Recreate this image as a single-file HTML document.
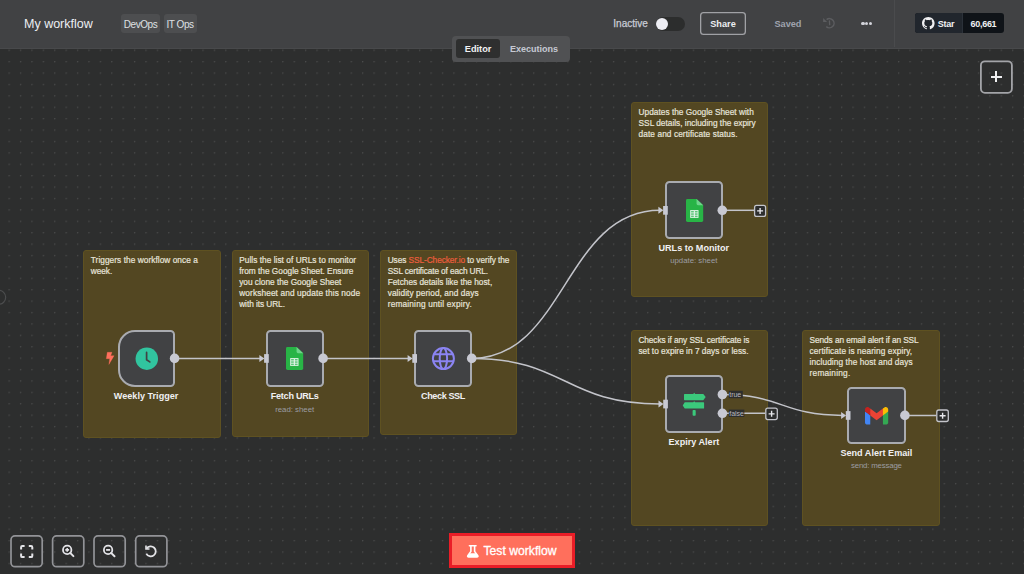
<!DOCTYPE html>
<html><head><meta charset="utf-8">
<style>
*{box-sizing:border-box;margin:0;padding:0}
html,body{width:1024px;height:574px;overflow:hidden}
body{position:relative;background:#2d2e2e;font-family:"Liberation Sans",sans-serif;color:#e4e4e6}
.abs{position:absolute}
svg{position:absolute;left:0;top:0;overflow:visible}
#hdr{position:absolute;left:0;top:0;width:1024px;height:48.7px;background:#414244;border-bottom:1px solid #48494b}
.tag{position:absolute;top:14px;height:18.5px;background:#4d4e50;border-radius:3px;font-size:10px;line-height:22.6px;letter-spacing:-0.45px;color:#dfe0e4;text-align:center}
.sticky{position:absolute;background:#534722;border:1px solid #5e5121;border-radius:3px;font-size:8.3px;line-height:10.9px;color:#e6e3da;padding:4px 0 0 6.6px;white-space:nowrap;-webkit-text-stroke:0.2px #e6e3da}
.sticky a{color:#ec5d3e;-webkit-text-stroke:0.2px #ec5d3e;text-decoration:none}
.node{position:absolute;width:58.2px;height:57px;background:#414244;border:2px solid #a9abb0;border-radius:4.5px}
.lbl{position:absolute;font-size:9.1px;line-height:10px;font-weight:700;color:#f0f0f2;white-space:nowrap;text-align:center;width:140px}
.sub{position:absolute;font-size:7.8px;line-height:10px;color:#9c9da2;white-space:nowrap;text-align:center;width:140px}
.btn{position:absolute;top:535px;width:32.8px;height:32.5px;border:2px solid #939498;border-radius:4.5px}
</style></head><body>
<svg width="1024" height="574">
 <defs>
  <pattern id="dots" x="0" y="0" width="11.404" height="11.404" patternUnits="userSpaceOnUse" patternTransform="translate(8.5 49.6)">
   <circle cx="0.5" cy="0.5" r="0.85" fill="#4a4b4b"/>
  </pattern>
 </defs>
 <rect x="0" y="48" width="1024" height="526" fill="url(#dots)"/>
 <circle cx="-1.3" cy="297.3" r="7" fill="none" stroke="#4c4d4e" stroke-width="1.2"/>
</svg>

<div id="hdr">
  <div class="abs" style="left:24px;top:17px;font-size:12.5px;color:#eceef2">My workflow</div>
  <div class="tag" style="left:121px;width:39px">DevOps</div>
  <div class="tag" style="left:163.5px;width:33px">IT Ops</div>
  <div class="abs" style="left:613.3px;top:18px;font-size:10px;color:#c9ccd6;-webkit-text-stroke:0.25px #c9ccd6">Inactive</div>
  <div class="abs" style="left:655.5px;top:16.6px;width:29px;height:14px;border-radius:7px;background:#2c2d2d"></div>
  <div class="abs" style="left:656px;top:17.5px;width:12.4px;height:12.4px;border-radius:50%;background:#eeeef4"></div>
  <div class="abs" style="left:700px;top:12.4px;width:46px;height:22.5px;border:0;box-shadow:inset 0 0 0 1.3px #a0a1a5;border-radius:3.5px;font-size:9.2px;font-weight:700;line-height:24.4px;text-align:center;color:#eceef2">Share</div>
  <div class="abs" style="left:774.4px;top:19px;font-size:9.2px;font-weight:700;color:#9fa3ae">Saved</div>
  <svg style="left:818px;top:13px" width="22" height="20" viewBox="0 0 22 20">
    <path d="M8.6 6.6 A4.6 4.6 0 1 1 8.3 13.6" fill="none" stroke="#5c5d60" stroke-width="1.5"/>
    <path d="M5.1 5 L5.1 9 L9.1 9Z" fill="#5c5d60"/>
    <path d="M11.4 7.8 L11.7 11.6" fill="none" stroke="#5c5d60" stroke-width="1.3" stroke-linecap="round"/>
  </svg>
  <div class="abs" style="left:861.3px;top:21.5px;width:3.3px;height:3.3px;border-radius:50%;background:#d2d3da"></div>
  <div class="abs" style="left:865.1px;top:21.5px;width:3.3px;height:3.3px;border-radius:50%;background:#d2d3da"></div>
  <div class="abs" style="left:868.9px;top:21.5px;width:3.3px;height:3.3px;border-radius:50%;background:#d2d3da"></div>
  <div class="abs" style="left:894px;top:0;width:1px;height:47px;background:#4a4b4d"></div>
  <div class="abs" style="left:915.2px;top:13.4px;width:88.6px;height:19.7px;border-radius:3px;background:#0f1318;overflow:hidden">
    <div class="abs" style="left:0;top:0;width:48.2px;height:19.7px;background:#21262d;border-right:1px solid #2b3139"></div>
  </div>
  <svg style="left:922.2px;top:16.8px" width="12.6" height="12.6" viewBox="0 0 16 16">
    <path fill="#f0f0f2" d="M8 0C3.58 0 0 3.58 0 8c0 3.54 2.29 6.53 5.47 7.59.4.07.55-.17.55-.38 0-.19-.01-.82-.01-1.49-2.01.37-2.53-.49-2.69-.94-.09-.23-.48-.94-.82-1.13-.28-.15-.68-.52-.01-.53.63-.01 1.08.58 1.23.82.72 1.21 1.87.87 2.33.66.07-.52.28-.87.51-1.07-1.78-.2-3.64-.89-3.64-3.95 0-.87.31-1.59.82-2.15-.08-.2-.36-1.02.08-2.12 0 0 .67-.21 2.2.82.64-.18 1.32-.27 2-.27.68 0 1.36.09 2 .27 1.53-1.04 2.2-.82 2.2-.82.44 1.1.16 1.92.08 2.12.51.56.82 1.27.82 2.15 0 3.07-1.87 3.75-3.65 3.95.29.25.54.73.54 1.48 0 1.07-.01 1.93-.01 2.2 0 .21.15.46.55.38A8.013 8.013 0 0016 8c0-4.42-3.58-8-8-8z"/>
  </svg>
  <div class="abs" style="left:937.8px;top:18.8px;font-size:9px;letter-spacing:-0.3px;font-weight:700;color:#f0f0f2">Star</div>
  <div class="abs" style="left:970.5px;top:18.8px;font-size:9px;letter-spacing:-0.28px;font-weight:700;color:#f0f0f2">60,661</div>
</div>

<!-- tabs -->
<div class="abs" style="left:452.3px;top:35.5px;width:117.7px;height:26.1px;background:#505153;border-radius:4px"></div>
<div class="abs" style="left:455.8px;top:39px;width:44.3px;height:19.3px;background:#2e2f2f;border-radius:3px"></div>
<div class="abs" style="left:464.8px;top:43.5px;font-size:9.2px;font-weight:700;color:#f2f2f4">Editor</div>
<div class="abs" style="left:509.9px;top:43.5px;font-size:9.05px;font-weight:700;color:#c6c9d3">Executions</div>

<!-- stickies -->
<div class="sticky" style="left:83.2px;top:250px;width:137.7px;height:188px"><div style="letter-spacing:0.049px">Triggers the workflow once a</div><div style="letter-spacing:-0.047px">week.</div></div>
<div class="sticky" style="left:231.6px;top:250px;width:137.3px;height:186.7px"><div style="letter-spacing:0.036px">Pulls the list of URLs to monitor</div><div style="letter-spacing:-0.007px">from the Google Sheet. Ensure</div><div style="letter-spacing:-0.012px">you clone the Google Sheet</div><div style="letter-spacing:0.116px">worksheet and update this node</div><div style="letter-spacing:-0.065px">with its URL.</div></div>
<div class="sticky" style="left:380.1px;top:250px;width:137.4px;height:185px"><div style="letter-spacing:-0.076px">Uses <a>SSL-Checker.io</a> to verify the</div><div style="letter-spacing:-0.13px">SSL certificate of each URL.</div><div style="letter-spacing:-0.006px">Fetches details like the host,</div><div style="letter-spacing:0.079px">validity period, and days</div><div style="letter-spacing:0.178px">remaining until expiry.</div></div>
<div class="sticky" style="left:631px;top:101.8px;width:137.3px;height:195.7px"><div style="letter-spacing:0.012px">Updates the Google Sheet with</div><div style="letter-spacing:-0.004px">SSL details, including the expiry</div><div style="letter-spacing:0.079px">date and certificate status.</div></div>
<div class="sticky" style="left:630.8px;top:330px;width:137.5px;height:196px"><div style="letter-spacing:-0.08px">Checks if any SSL certificate is</div><div style="letter-spacing:0.014px">set to expire in 7 days or less.</div></div>
<div class="sticky" style="left:802px;top:330px;width:137.5px;height:195.8px"><div style="letter-spacing:-0.087px">Sends an email alert if an SSL</div><div style="letter-spacing:0.092px">certificate is nearing expiry,</div><div style="letter-spacing:0.094px">including the host and days</div><div style="letter-spacing:0.206px">remaining.</div></div>

<!-- edges -->
<svg width="1024" height="574">
 <g fill="none" stroke="#c3c4ca" stroke-width="1.5">
  <path d="M174.6 358.4 H261"/>
  <path d="M323.1 358.4 H409.2"/>
  <path d="M471.7 358.4 C565 358.4 565 210.3 660 210.3"/>
  <path d="M471.7 358.4 C565 358.4 565 404 660 404"/>
  <path d="M722.4 394.5 C782 394.5 782 415.4 843 415.4"/>
  <path d="M722.3 210.3 H754"/>
  <path d="M722.4 413.3 H765.2"/>
  <path d="M904.9 415.4 H936.3"/>
 </g>
</svg>

<!-- nodes -->
<div class="node" style="left:117.6px;top:329.5px;width:57.7px;height:57.6px;border-radius:17px 4.5px 4.5px 17px"></div>
<div class="node" style="left:265.6px;top:329.5px;height:57.7px"></div>
<div class="node" style="left:413.9px;top:329.6px;height:57.5px"></div>
<div class="node" style="left:664.7px;top:181.3px;height:57.5px"></div>
<div class="node" style="left:664.8px;top:375.2px;height:57.7px"></div>
<div class="node" style="left:847.4px;top:386.6px;height:57.4px"></div>

<svg width="1024" height="574">
 <!-- input handles -->
 <g fill="#c8c9d2">
  <path d="M259.4 354.9 L264.4 358.4 L259.4 361.9Z"/><rect x="264.1" y="354.1" width="4.7" height="8.7"/>
  <path d="M407.6 354.9 L412.6 358.4 L407.6 361.9Z"/><rect x="412.3" y="354.1" width="4.7" height="8.7"/>
  <path d="M658.4 206.8 L663.4 210.3 L658.4 213.8Z"/><rect x="663.1" y="206" width="4.7" height="8.7"/>
  <path d="M658.5 400.5 L663.5 404 L658.5 407.5Z"/><rect x="663.2" y="399.7" width="4.7" height="8.7"/>
  <path d="M841.1 411.9 L846.1 415.4 L841.1 418.9Z"/><rect x="845.8" y="411.1" width="4.7" height="8.7"/>
  <!-- output handles -->
  <circle cx="174.6" cy="358.4" r="4.8"/>
  <circle cx="323.1" cy="358.4" r="4.8"/>
  <circle cx="471.7" cy="358.4" r="4.8"/>
  <circle cx="722.3" cy="210.3" r="4.8"/>
  <circle cx="722.4" cy="394.5" r="4.8"/>
  <circle cx="722.4" cy="413.3" r="4.8"/>
  <circle cx="904.9" cy="415.4" r="4.8"/>
 </g>
 <!-- plus buttons -->
 <g fill="#2d2e2e" stroke="#c3c4ca" stroke-width="1.3">
  <rect x="754.6" y="205.4" width="11" height="11" rx="2"/>
  <rect x="765.8" y="408.1" width="11.5" height="11.5" rx="2"/>
  <rect x="936.8" y="410" width="11.5" height="11.5" rx="2"/>
 </g>
 <g stroke="#e8e8ec" stroke-width="1.4">
  <path d="M757.1 210.9 h6 M760.1 207.9 v6"/>
  <path d="M768.6 413.85 h6 M771.6 410.85 v6"/>
  <path d="M939.6 415.75 h6 M942.6 412.75 v6"/>
 </g>
 <!-- true / false labels -->
 <rect x="728.8" y="390.8" width="14" height="7.4" fill="#2d2e2e"/>
 <rect x="728.8" y="409.6" width="15.5" height="7.4" fill="#2d2e2e"/>
 <text x="729.2" y="397" font-size="7" fill="#b8b9be" font-family="Liberation Sans">true</text>
 <text x="729.2" y="415.8" font-size="7" fill="#b8b9be" font-family="Liberation Sans">false</text>

 <!-- bolt -->
 <path d="M107.3 352.3 L112 352.3 L110.7 355.7 L114.1 355.7 L108.9 364.4 L109.7 358.7 L106.3 358.7Z" fill="#ff6f5c" stroke="#ff6f5c" stroke-width="0.3" stroke-linejoin="round"/>
 <!-- clock -->
 <circle cx="146.8" cy="358.65" r="11.24" fill="#31c49f"/>
 <path d="M146.6 352.4 V359.7 L149.8 361.9" fill="none" stroke="#414244" stroke-width="1.7" stroke-linecap="round" stroke-linejoin="round"/>
 <!-- globe -->
 <g fill="none" stroke="#8b84f3" stroke-width="2">
  <circle cx="443.4" cy="358.6" r="10.5"/>
  <ellipse cx="443.4" cy="358.6" rx="3.7" ry="10.5"/>
  <path d="M433.5 354.2 H453.3 M433.5 361.3 H453.3"/>
 </g>
</svg>

<!-- sheets icons -->
<svg style="left:286.4px;top:347.1px" width="17.2" height="23" viewBox="0 0 17.2 23">
 <path d="M1.5 0 H10.6 L17.2 6.2 V21.5 Q17.2 23 15.7 23 H1.5 Q0 23 0 21.5 V1.5 Q0 0 1.5 0Z" fill="#28b446"/>
 <path d="M10.6 0 L17.2 6.2 H12 Q10.6 6.2 10.6 4.8Z" fill="#6fd48a"/>
 <rect x="4.2" y="11.1" width="8.3" height="7.8" fill="#e6f6ea"/>
 <g fill="#5cc67a"><rect x="5.1" y="12" width="2.7" height="1.5"/><rect x="8.9" y="12" width="2.7" height="1.5"/><rect x="5.1" y="14.3" width="2.7" height="1.5"/><rect x="8.9" y="14.3" width="2.7" height="1.5"/><rect x="5.1" y="16.6" width="2.7" height="1.5"/><rect x="8.9" y="16.6" width="2.7" height="1.5"/></g>
</svg>
<svg style="left:685.6px;top:198.9px" width="17.2" height="23" viewBox="0 0 17.2 23">
 <path d="M1.5 0 H10.6 L17.2 6.2 V21.5 Q17.2 23 15.7 23 H1.5 Q0 23 0 21.5 V1.5 Q0 0 1.5 0Z" fill="#28b446"/>
 <path d="M10.6 0 L17.2 6.2 H12 Q10.6 6.2 10.6 4.8Z" fill="#6fd48a"/>
 <rect x="4.2" y="11.1" width="8.3" height="7.8" fill="#e6f6ea"/>
 <g fill="#5cc67a"><rect x="5.1" y="12" width="2.7" height="1.5"/><rect x="8.9" y="12" width="2.7" height="1.5"/><rect x="5.1" y="14.3" width="2.7" height="1.5"/><rect x="8.9" y="14.3" width="2.7" height="1.5"/><rect x="5.1" y="16.6" width="2.7" height="1.5"/><rect x="8.9" y="16.6" width="2.7" height="1.5"/></g>
</svg>
<!-- signs icon -->
<svg width="1024" height="574">
 <g fill="#3bc97c">
  <path d="M684.6 394 H693.2 L694.2 392.7 L695.2 394 H703.3 L705.7 397.1 L703.3 400.2 H684.6 Q684 400.2 684 399.6 V394.6 Q684 394 684.6 394Z"/>
  <path d="M684.75 402.3 H693.2 L694.2 401.3 L695.2 402.3 H703.5 Q704.1 402.3 704.1 402.9 V408 Q704.1 408.6 703.5 408.6 H684.75 L682.7 405.45Z"/>
  <rect x="692.6" y="409.9" width="3.1" height="5.8" rx="0.8"/>
 </g>
</svg>
<!-- gmail -->
<svg style="left:864.9px;top:406.75px" width="23.2" height="17.5" viewBox="0 0 256 193">
 <path fill="#4285F4" d="M58.182 192.05V93.14L27.507 65.077 0 49.504v125.091c0 9.658 7.825 17.455 17.455 17.455h40.727Z"/>
 <path fill="#34A853" d="M197.818 192.05h40.727c9.659 0 17.455-7.826 17.455-17.455V49.505l-31.156 17.837-27.026 25.798v98.91Z"/>
 <path fill="#EA4335" d="m58.182 93.14-4.174-38.647 4.174-36.989L128 69.868l69.818-52.364 4.669 34.992-4.669 40.644L128 145.504z"/>
 <path fill="#FBBC04" d="M197.818 17.504V93.14L256 49.504V26.231c0-21.585-24.64-33.89-41.89-20.945l-16.292 12.218Z"/>
 <path fill="#C5221F" d="M0 49.504l26.759 20.07L58.182 93.14V17.504L41.89 5.286C24.61-7.66 0 4.646 0 26.23v23.273Z"/>
</svg>

<!-- labels -->
<div class="lbl" style="left:76.1px;top:390.8px">Weekly Trigger</div>
<div class="lbl" style="left:224.7px;top:390.9px;letter-spacing:-0.27px">Fetch URLs</div>
<div class="sub" style="left:224.7px;top:404.9px">read: sheet</div>
<div class="lbl" style="left:373px;top:390.8px;letter-spacing:-0.4px">Check SSL</div>
<div class="lbl" style="left:623.8px;top:242.5px">URLs to Monitor</div>
<div class="sub" style="left:623.8px;top:256.4px">update: sheet</div>
<div class="lbl" style="left:623.9px;top:436.8px">Expiry Alert</div>
<div class="lbl" style="left:806.4px;top:447.7px">Send Alert Email</div>
<div class="sub" style="left:806.4px;top:461.4px;letter-spacing:-0.17px">send: message</div>

<!-- top-right plus -->
<svg width="1024" height="574"><rect x="980.9" y="61.3" width="31" height="31.5" rx="4" fill="none" stroke="#a3a4a8" stroke-width="1.8"/></svg>
<div class="abs" style="left:990.8px;top:75.6px;width:11px;height:2px;background:#f0f0f2"></div>
<div class="abs" style="left:995.3px;top:71.1px;width:2px;height:11px;background:#f0f0f2"></div>

<!-- bottom toolbar -->
<svg width="1024" height="574">
 <g fill="none" stroke="#929397" stroke-width="1.7">
  <rect x="11" y="535.9" width="31.2" height="30.8" rx="4"/>
  <rect x="52.6" y="535.9" width="31.2" height="30.8" rx="4"/>
  <rect x="94" y="535.9" width="31.2" height="30.8" rx="4"/>
  <rect x="135.7" y="535.9" width="31.2" height="30.8" rx="4"/>
 </g>
 <g fill="none" stroke="#e4e4e8" stroke-width="1.8">
  <path d="M21.1 549.6 V547.3 Q21.1 546.1 22.3 546.1 H24.6 M28.8 546.1 H31.1 Q32.3 546.1 32.3 547.3 V549.6 M32.3 553.6 V555.9 Q32.3 557.1 31.1 557.1 H28.8 M24.6 557.1 H22.3 Q21.1 557.1 21.1 555.9 V553.6" stroke-width="2"/>
  <circle cx="67.2" cy="549.9" r="4.2"/><path d="M70.2 552.9 L73.4 556.1" stroke-linecap="round" stroke-width="2"/><path d="M65.3 549.9 H69.1 M67.2 548 V551.8" stroke-width="1.6"/>
  <circle cx="108.1" cy="549.9" r="4.2"/><path d="M111.1 552.9 L114.5 556.3" stroke-linecap="round" stroke-width="2"/><path d="M106.1 549.9 H110.1" stroke-width="1.8"/>
  <path d="M146.6 548.6 A5 5 0 1 1 146.3 553.6"/><path d="M146 545.5 V549 H149.5" stroke-width="1.6"/>
 </g>
</svg>

<!-- test workflow -->
<div class="abs" style="left:449.1px;top:533.3px;width:125.9px;height:34.9px;background:#ff6f5c;border:3.3px solid #ea1d27"></div>
<svg style="left:462px;top:541px" width="20" height="20" viewBox="0 0 20 20">
 <path d="M7.4 4.7 H14" fill="none" stroke="#fff" stroke-width="1.6" stroke-linecap="round"/>
 <path d="M8.9 4.7 V10.4 L5.8 14.8 Q5.3 15.9 6.6 15.9 H15 Q16.3 15.9 15.8 14.8 L12.6 10.4 V4.7" fill="none" stroke="#fff" stroke-width="1.6" stroke-linejoin="round"/>
 <path d="M7.6 12.2 H14 L15.8 14.8 Q16.3 15.9 15 15.9 H6.6 Q5.3 15.9 5.8 14.8Z" fill="#fff"/>
</svg>
<div class="abs" style="left:483.5px;top:543.5px;font-size:12.2px;color:#ffffff;-webkit-text-stroke:0.3px #fff">Test workflow</div>
</body></html>
